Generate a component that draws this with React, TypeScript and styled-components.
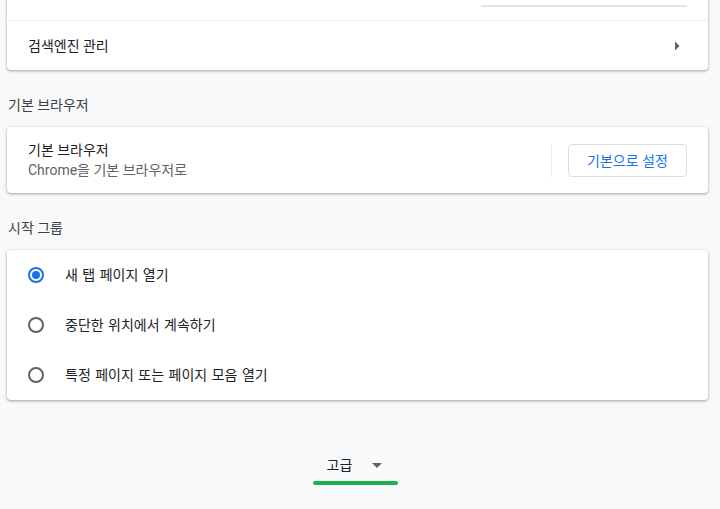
import React from "react";
import styled, { createGlobalStyle } from "styled-components";

const GlobalStyle = createGlobalStyle`
  html, body {
    margin: 0;
    padding: 0;
    background: #f8f9fa;
    overflow: hidden;
  }
  body {
    font-family: Roboto, "Noto Sans CJK KR", sans-serif;
    font-size: 14px;
    color: #202124;
  }
`;

const Page = styled.div`
  width: 701px;
  margin: -37px 0 0 7px;
  display: flex;
  flex-direction: column;
`;

const Card = styled.div`
  background: #fff;
  border-radius: 4px;
  box-shadow: 0 1px 2px 0 rgba(60, 64, 67, 0.3), 0 1px 3px 1px rgba(60, 64, 67, 0.15);
  display: flex;
  flex-direction: column;
`;

const Row = styled.div<{ $h: number; $divider?: boolean }>`
  height: ${(p) => p.$h}px;
  box-sizing: border-box;
  display: flex;
  align-items: center;
  padding: 0 21px;
  border-top: ${(p) => (p.$divider ? "1px solid #efefef" : "none")};
`;

const Label = styled.div`
  flex: 1;
  line-height: 20px;
  color: #202124;
`;

const LinkText = styled.span`
  color: #1a73e8;
`;

const SelectBox = styled.div`
  width: 206px;
  height: 26px;
  margin-top: 4px;
  padding: 0 0 8px 8px;
  border-bottom: 2px solid #e3e3e3;
  display: flex;
  align-items: center;
  box-sizing: border-box;
`;

const SubArrow = styled.svg`
  width: 6px;
  height: 10px;
  margin-right: 7px;
`;

const SectionTitle = styled.div`
  padding: 25px 0 12px 1px;
  line-height: 20px;
  color: #3c4043;
`;

const TwoLine = styled.div`
  padding: 13px 21px;
  display: flex;
  align-items: center;
`;

const Texts = styled.div`
  flex: 1;
  display: flex;
  flex-direction: column;
`;

const Primary = styled.div`
  line-height: 20px;
  color: #202124;
`;

const Secondary = styled.div`
  line-height: 20px;
  color: #5f6368;
`;

const Separator = styled.div`
  width: 1px;
  height: 33px;
  background: #ececec;
  margin-right: 16px;
`;

const OutlineButton = styled.button`
  height: 33px;
  width: 119px;
  border: 1px solid #dadce0;
  border-radius: 4px;
  background: #fff;
  color: #1a73e8;
  font-family: Roboto, "Noto Sans CJK KR", sans-serif;
  font-size: 14px;
  padding: 0;
  cursor: pointer;
`;

const RadioRow = styled.label`
  height: 50px;
  display: flex;
  align-items: center;
  padding-left: 21px;
  gap: 21px;
  color: #202124;
  line-height: 20px;
`;

const RadioCircle = styled.span<{ $checked?: boolean }>`
  width: 16px;
  height: 16px;
  box-sizing: border-box;
  border-radius: 50%;
  border: 2px solid ${(p) => (p.$checked ? "#1a73e8" : "#5f6368")};
  display: flex;
  align-items: center;
  justify-content: center;
  &::after {
    content: "";
    width: 8px;
    height: 8px;
    border-radius: 50%;
    background: ${(p) => (p.$checked ? "#1a73e8" : "transparent")};
  }
`;

const RadioText = styled.span`
  word-spacing: 1px;
`;

const AdvancedWrap = styled.div`
  padding: 55px 6px 0 0;
  display: flex;
  flex-direction: column;
  align-items: center;
`;

const AdvancedButton = styled.div`
  height: 20px;
  display: flex;
  align-items: center;
  gap: 20px;
  color: #202124;
  line-height: 20px;
`;

const DropArrow = styled.svg`
  width: 10px;
  height: 5px;
`;

const Highlight = styled.div`
  width: 85px;
  height: 4px;
  margin-top: 6px;
  margin-left: 2px;
  border-radius: 2px;
  background: #1db04e;
`;

const options = [
  { label: "새 탭 페이지 열기", checked: true },
  { label: "중단한 위치에서 계속하기", checked: false },
  { label: "특정 페이지 또는 페이지 모음 열기", checked: false },
];

export default function App() {
  return (
    <>
      <GlobalStyle />
      <Page>
        <Card>
          <Row $h={57}>
            <Label>
              <LinkText>주소 표시줄</LinkText>에서 사용되는 검색엔진
            </Label>
            <SelectBox>Google</SelectBox>
          </Row>
          <Row $h={50} $divider>
            <Label>검색엔진 관리</Label>
            <SubArrow viewBox="0 0 6 10">
              <path d="M1 0.5 L5.5 5 L1 9.5 Z" fill="#5f6368" />
            </SubArrow>
          </Row>
        </Card>

        <SectionTitle>기본 브라우저</SectionTitle>
        <Card>
          <TwoLine>
            <Texts>
              <Primary>기본 브라우저</Primary>
              <Secondary>Chrome을 기본 브라우저로</Secondary>
            </Texts>
            <Separator />
            <OutlineButton>기본으로 설정</OutlineButton>
          </TwoLine>
        </Card>

        <SectionTitle>시작 그룹</SectionTitle>
        <Card>
          {options.map((o) => (
            <RadioRow key={o.label}>
              <RadioCircle $checked={o.checked} />
              <RadioText>{o.label}</RadioText>
            </RadioRow>
          ))}
        </Card>

        <AdvancedWrap>
          <AdvancedButton>
            <span>고급</span>
            <DropArrow viewBox="0 0 10 5">
              <path d="M0 0 L10 0 L5 5 Z" fill="#5f6368" />
            </DropArrow>
          </AdvancedButton>
          <Highlight />
        </AdvancedWrap>
      </Page>
    </>
  );
}
